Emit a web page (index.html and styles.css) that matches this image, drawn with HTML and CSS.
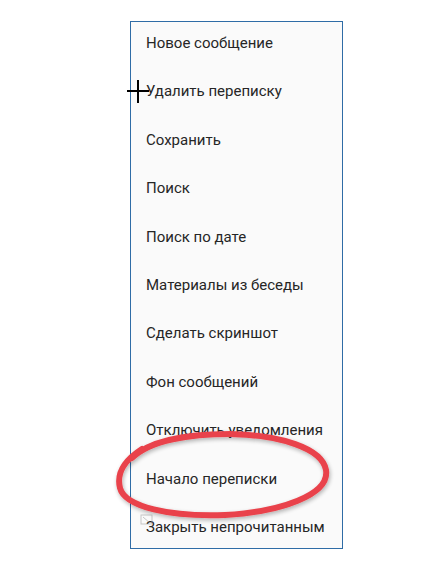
FILE: index.html
```
<!DOCTYPE html>
<html lang="ru">
<head>
<meta charset="utf-8">
<link rel="stylesheet" href="styles.css">
</head>
<body>
<div class="frame">
  <ul class="menu">
    <li>Новое сообщение</li>
    <li>Удалить переписку</li>
    <li>Сохранить</li>
    <li>Поиск</li>
    <li>Поиск по дате</li>
    <li>Материалы из беседы</li>
    <li>Сделать скриншот</li>
    <li>Фон сообщений</li>
    <li>Отключить уведомления</li>
    <li>Начало переписки</li>
    <li>Закрыть непрочитанным</li>
  </ul>
</div>
<svg class="overlay" width="445" height="564" viewBox="0 0 445 564">
  <defs>
    <filter id="sh" x="-20%" y="-20%" width="140%" height="140%">
      <feGaussianBlur in="SourceAlpha" stdDeviation="2"/>
      <feOffset dx="1" dy="2"/>
      <feComponentTransfer><feFuncA type="linear" slope="0.3"/></feComponentTransfer>
      <feMerge><feMergeNode/><feMergeNode in="SourceGraphic"/></feMerge>
    </filter>
  </defs>
  <g filter="url(#sh)">
    <path d="M132 458 C 150 440, 190 434, 230 434 C 280 435, 322 448, 326 470 C 330 495, 280 512, 225 515 C 170 517, 125 507, 120 488 C 116 472, 125 460, 142 449" fill="none" stroke="#e9434b" stroke-width="6" stroke-linecap="round"/>
  </g>
  <g stroke="#000" stroke-width="2">
    <line x1="138" y1="80" x2="138" y2="103"/>
    <line x1="127" y1="91" x2="149" y2="91"/>
  </g>
  <g opacity="0.55">
    <rect x="141" y="515" width="11" height="9" fill="none" stroke="#9a9a9a" stroke-width="1"/>
    <path d="M143 517 L150 523" stroke="#9a9a9a" stroke-width="1"/>
  </g>
</svg>
</body>
</html>
```
FILE: styles.css
```
html, body {
  margin: 0;
  padding: 0;
  background: #ffffff;
}
body {
  position: relative;
  width: 445px;
  height: 564px;
  overflow: hidden;
}
.frame {
  margin: 21px 0 0 130px;
  width: 211px;
  height: 526px;
  border: 1px solid #2f6ca6;
  background: #fafafa;
  overflow: hidden;
}
.menu {
  list-style: none;
  margin: -3px 0 0 0;
  padding: 0;
}
.menu li {
  height: 48.4px;
  line-height: 48.4px;
  padding-left: 15px;
  font-family: Roboto, "Noto Sans", sans-serif;
  font-size: 15px;
  color: #262626;
  white-space: nowrap;
}
.overlay {
  position: absolute;
  left: 0;
  top: 0;
  pointer-events: none;
}
```
